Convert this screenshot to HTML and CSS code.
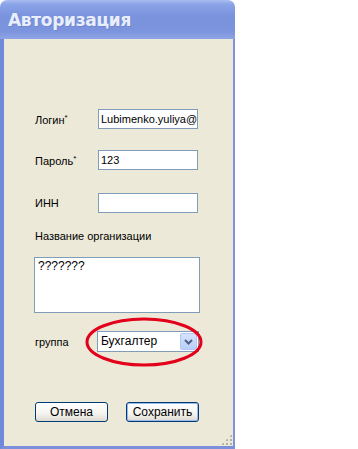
FILE: index.html
```html
<!DOCTYPE html>
<html lang="ru">
<head>
    <meta charset="UTF-8">
    <title>Авторизация</title>
    <link rel="stylesheet" href="styles.css">
</head>
<body>
    <div class="window">
        <div class="titlebar">
            <span class="title">Авторизация</span>
        </div>
        <div class="frame">
            <div class="row row-login">
                <span class="label">Логин<sup>*</sup></span>
                <div class="field">Lubimenko.yuliya@</div>
            </div>
            <div class="row row-pass">
                <span class="label">Пароль<sup>*</sup></span>
                <div class="field">123</div>
            </div>
            <div class="row row-inn">
                <span class="label">ИНН</span>
                <div class="field"></div>
            </div>
            <div class="org-label">Название организации</div>
            <div class="memo">???????</div>
            <div class="row row-group">
                <span class="label">группа</span>
                <div class="combo">
                    <span class="combo-text">Бухгалтер</span>
                    <span class="combo-btn">
                        <svg width="9" height="6" viewBox="0 0 9 6">
                            <path d="M1 1 L4.5 4.5 L8 1" fill="none" stroke="#4d6185" stroke-width="2"/>
                        </svg>
                    </span>
                </div>
                <svg class="mark" width="122" height="52" viewBox="0 0 122 52">
                    <ellipse cx="59" cy="25" rx="57" ry="23" fill="none" stroke="#e3001b" stroke-width="3"/>
                </svg>
            </div>
            <div class="buttons">
                <button class="btn">Отмена</button>
                <button class="btn btn-default">Сохранить</button>
            </div>
            <div class="grip"></div>
        </div>
    </div>
</body>
</html>
```

FILE: styles.css
```css
* {
    margin: 0;
    padding: 0;
    box-sizing: border-box;
}

body {
    background: #fff;
    font-family: 'Liberation Sans', Arial, sans-serif;
    font-size: 11px;
    color: #000;
}

.window {
    width: 235px;
    height: 449px;
    display: flex;
    flex-direction: column;
}

.titlebar {
    height: 39px;
    background: linear-gradient(180deg, #a9bdf0 0%, #8aa2e6 12%, #7a93dd 40%, #7c94de 80%, #8ea4e4 100%);
    border-radius: 7px 7px 0 0;
    padding: 10px 0 0 8px;
}

.title {
    font-family: 'DejaVu Sans', sans-serif;
    font-weight: bold;
    font-size: 17px;
    letter-spacing: -0.3px;
    color: #e9eefb;
    text-shadow: 1px 1px 0 #6f86cf;
}

.frame {
    flex: 1;
    position: relative;
    background: #ece9d8;
    border-left: 4px solid #7189d9;
    border-right: 2px solid #7d93dc;
    border-bottom: 3px solid #7b90db;
    padding-left: 31px;
}

.row {
    display: flex;
    align-items: center;
    height: 20px;
}

.row-login { margin-top: 70px; }
.row-pass  { margin-top: 21px; }
.row-inn   { margin-top: 23px; }

.label {
    width: 63px;
    font-size: 11px;
}

.label sup {
    font-size: 8px;
    vertical-align: 4px;
}

.field {
    width: 100px;
    height: 20px;
    background: #fff;
    border: 1px solid #7f9db9;
    padding: 3px 0 0 2px;
    font-size: 11px;
    white-space: nowrap;
    overflow: hidden;
}

.org-label {
    margin-top: 17px;
    height: 14px;
}

.memo {
    margin-top: 13px;
    margin-left: -1px;
    width: 166px;
    height: 56px;
    background: #fff;
    border: 1px solid #7f9db9;
    padding: 1px 3px;
    font-size: 12px;
}

.row-group {
    position: relative;
    margin-top: 18px;
    height: 21px;
}

.row-group .label {
    width: 62px;
}

.combo {
    width: 102px;
    height: 21px;
    background: #fff;
    border: 1px solid #7f9db9;
    display: flex;
    align-items: stretch;
    padding: 1px;
}

.combo-text {
    flex: 1;
    font-size: 12px;
    padding: 1px 0 0 2px;
}

.combo-btn {
    width: 17px;
    background: linear-gradient(180deg, #d6e2fd 0%, #b9cefa 100%);
    border: 1px solid #b3c7f3;
    border-radius: 2px;
    display: flex;
    align-items: center;
    justify-content: center;
}

.mark {
    position: absolute;
    left: 50px;
    top: -14px;
}

.buttons {
    margin-top: 50px;
    display: flex;
    gap: 18px;
}

.btn {
    width: 73px;
    height: 20px;
    font-family: 'Liberation Sans', Arial, sans-serif;
    font-size: 12px;
    color: #000;
    background: linear-gradient(180deg, #ffffff 0%, #f4f3ee 60%, #dcdad0 100%);
    border: 1px solid #003c74;
    border-radius: 3px;
}

.btn-default {
    box-shadow: inset 0 0 0 1px #9bb7f0;
}

.grip {
    position: absolute;
    right: 1px;
    bottom: 1px;
    width: 11px;
    height: 11px;
    background: radial-gradient(circle, #b5b2a4 1px, transparent 1.2px) 0 0 / 4px 4px;
    clip-path: polygon(100% 0, 100% 100%, 0 100%);
}
```
